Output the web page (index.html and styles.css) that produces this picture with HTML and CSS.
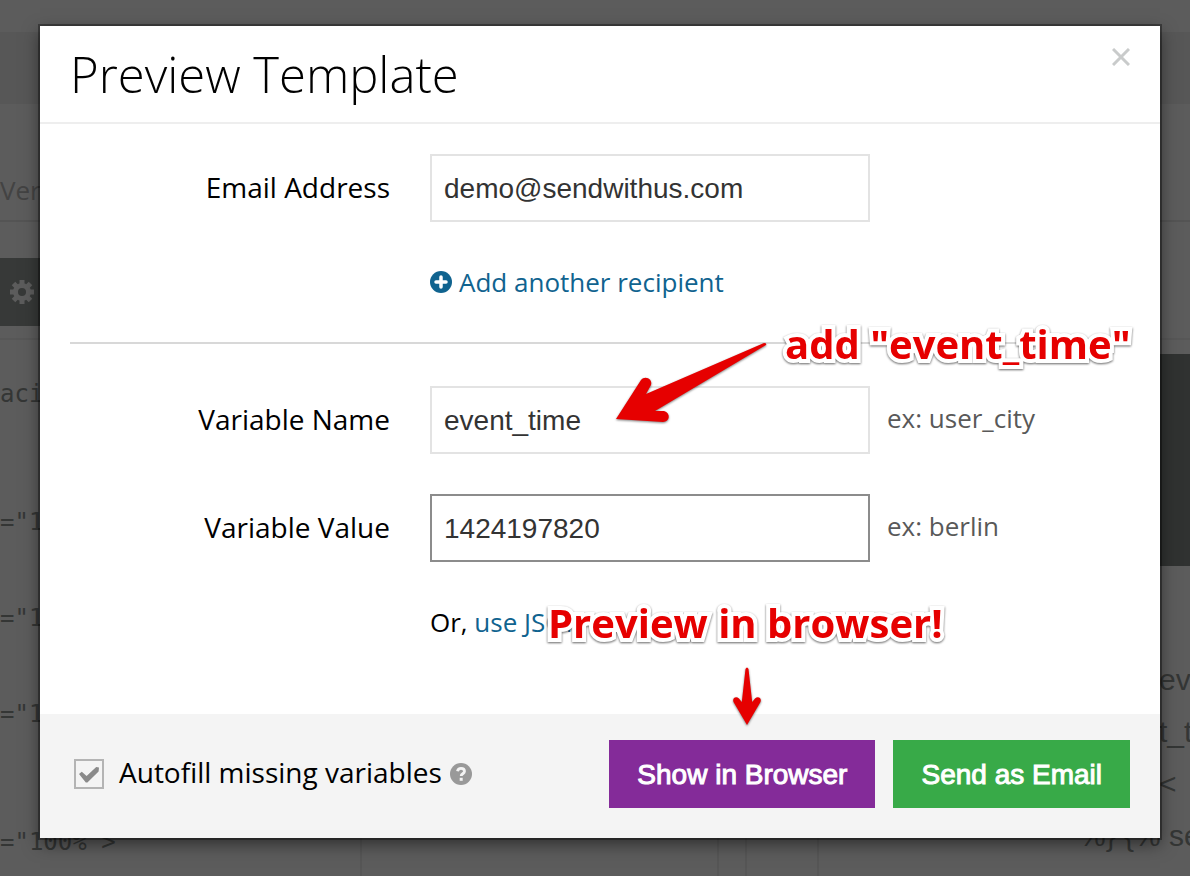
FILE: index.html
```html
<!DOCTYPE html>
<html lang="en">
<head>
    <meta charset="UTF-8">
    <meta name="viewport" content="width=device-width, initial-scale=1.0">
    <title>Preview Template</title>
    <link rel="stylesheet" href="styles.css">
</head>
<body>
    <!-- Dimmed editor behind the modal -->
    <div class="page">
        <div class="topbar"></div>
        <div class="subnav"></div>
        <div class="tabs">Ver</div>
        <div class="toolbar">
            <div class="toolbar-actions">
                <svg class="gear" viewBox="0 0 24 24">
                    <circle cx="12" cy="12" r="6.5" fill="none" stroke="currentColor" stroke-width="5"/>
                    <path d="M12 0v5M12 19v5M0 12h5M19 12h5M3.5 3.5l3.5 3.5M17 17l3.5 3.5M3.5 20.5l3.5-3.5M17 7l3.5-3.5" stroke="currentColor" stroke-width="5"/>
                </svg>
            </div>
        </div>
        <div class="workspace">
            <pre class="code">aci



="1


="1


="1



="100% &gt;</pre>
            <div class="pane"></div>
            <div class="gutter"></div>
            <div class="pane"></div>
            <div class="preview">
                <div class="preview-image"></div>
                <div class="preview-text">
                    <p class="indent-large">eve</p>
                    <p class="indent-large">t_t</p>
                    <p class="indent-large">&lt;</p>
                    <p>%} {% se</p>
                    <p class="indent-small">i</p>
                </div>
            </div>
        </div>
    </div>

    <div class="backdrop">
        <form class="modal">
            <header class="modal-header">
                <h1>Preview Template</h1>
                <button type="button" class="close" aria-label="Close">
                    <svg viewBox="0 0 18 18"><path d="M1 1l16 16M17 1L1 17" stroke="currentColor" stroke-width="3"/></svg>
                </button>
            </header>

            <div class="modal-body">
                <div class="row">
                    <label for="email">Email Address</label>
                    <input type="text" id="email" value="demo@sendwithus.com">
                </div>
                <div class="row-link">
                    <a href="#">
                        <svg class="icon" viewBox="0 0 22 22">
                            <circle cx="11" cy="11" r="11" fill="currentColor"/>
                            <path d="M11 6v10M6 11h10" stroke="#fff" stroke-width="3.500" stroke-linecap="round"/>
                        </svg>
                        Add another recipient
                    </a>
                </div>
                <hr>
                <div class="row">
                    <label for="var-name">Variable Name</label>
                    <input type="text" id="var-name" value="event_time">
                    <span class="hint">ex: user_city</span>
                </div>
                <div class="row">
                    <label for="var-value">Variable Value</label>
                    <input type="text" id="var-value" class="active" value="1424197820">
                    <span class="hint">ex: berlin</span>
                </div>
                <div class="row-link">Or,&nbsp;<a href="#">use JSON</a></div>
            </div>

            <footer class="modal-footer">
                <input type="checkbox" id="autofill" checked>
                <label for="autofill">Autofill missing variables</label>
                <svg class="icon help" viewBox="0 0 22 22">
                    <circle cx="11" cy="11" r="11" fill="currentColor"/>
                    <path d="M7.5 8.2C8 5.8 9.300 5.300 11 5.300c2 0 3.500 1.200 3.500 3 0 2.500-3.300 2.400-3.300 4.700" fill="none" stroke="#f4f4f4" stroke-width="2.800"/>
                    <path d="M9.700 14.800h3v3h-3z" fill="#f4f4f4"/>
                </svg>
                <div class="actions">
                    <button type="button" class="btn btn-purple">Show in Browser</button>
                    <button type="submit" class="btn btn-green">Send as Email</button>
                </div>
            </footer>

            <!-- Callouts -->
            <span class="note note-add">add "event_time"</span>
            <svg class="arrow arrow-left" viewBox="0 0 152 82">
                <path d="M1 77L26 38C30 33 38 37 36 43L31 52L149 1Q152 1 151 3L40 69L49 69C56 71 55 80 48 80Z"/>
            </svg>
            <span class="note note-preview">Preview in browser!</span>
            <svg class="arrow arrow-down" viewBox="0 0 30 60">
                <path d="M15 59L1.500 36C0 32 4 29.500 7 32.500L9.800 36L13.500 3Q15 0 16.500 3L20.200 36L23 32.500C26 29.500 30 32 28.500 36Z"/>
            </svg>
        </form>
    </div>
</body>
</html>
```
FILE: styles.css
```css
* {
    box-sizing: border-box;
}
body {
    margin: 0;
    background: #5c5c5c;
    color: #000;
    font-family: "Open Sans", sans-serif;
    font-size: 28px;
    line-height: 40px;
}

/* Page behind the modal */
.page {
    display: flex;
    flex-direction: column;
    height: 100vh;
    overflow: hidden;
    color: #343635;
}
.topbar {
    flex: 0 0 32px;
}
.subnav {
    flex: 0 0 72px;
    background: #575757;
}
.tabs {
    flex: 0 0 118px;
    padding-top: 66px;
    border-bottom: 2px solid #545454;
    color: #434343;
    font-size: 26px;
}
.toolbar {
    flex: 0 0 118px;
    padding-top: 36px;
    border-bottom: 2px solid #575757;
}
.toolbar-actions {
    display: flex;
    align-items: center;
    width: 362px;
    height: 68px;
    padding-left: 10px;
    background: #373938;
    color: #5c5c5c;
}
.gear {
    width: 24px;
    height: 24px;
}
.workspace {
    flex: 1;
    display: grid;
    grid-template-columns: 362px 355px 30px 70px 1fr;
    min-height: 0;
}
.code {
    margin: 0;
    padding-top: 38px;
    border-right: 2px solid #565656;
    font-family: "DejaVu Sans Mono", monospace;
    font-size: 24px;
    line-height: 32px;
}
.gutter {
    border: 2px solid #565656;
    border-width: 0 2px;
}
.pane + .preview {
    border-left: 2px solid #565656;
}
.preview-image {
    height: 212px;
    margin-top: 14px;
    background: #303231;
}
.preview-text {
    padding: 88px 0 0 260px;
    font-family: "Liberation Sans", sans-serif;
    font-size: 30px;
    line-height: 52px;
    white-space: nowrap;
}
.preview-text p {
    margin: 0;
}
.preview-text .indent-small {
    padding-left: 24px;
}
.preview-text .indent-large {
    padding-left: 80px;
}

/* Modal */
.backdrop {
    position: absolute;
    inset: 0;
    padding: 26px 30px 38px 40px;
    overflow: hidden;
}
.modal {
    position: relative;
    background: #fff;
    box-shadow: 0 0 0 2px rgba(0, 0, 0, 0.35), 0 6px 16px rgba(0, 0, 0, 0.5);
}
.modal-header {
    display: flex;
    justify-content: space-between;
    align-items: flex-start;
    padding: 14px 30px 14px;
    border-bottom: 2px solid #eee;
}
.modal-header h1 {
    margin: 0;
    font-size: 49px;
    font-weight: 300;
    line-height: 68px;
}
.close {
    width: 18px;
    height: 18px;
    margin-top: 8px;
    padding: 0;
    border: 0;
    background: none;
    color: #c9cbcb;
    cursor: pointer;
}
.close svg {
    display: block;
}
.modal-body {
    padding: 30px 30px 72px;
}
label {
    padding-bottom: 2px;
}
.row {
    display: flex;
    align-items: center;
    margin-bottom: 40px;
}
.row label {
    width: 320px;
    margin-right: 40px;
    text-align: right;
}
.row input {
    width: 440px;
    height: 68px;
    padding: 2px 12px 0;
    border: 2px solid #e3e3e3;
    border-radius: 0;
    background: #fff;
    color: #333;
    font-family: "Liberation Sans", sans-serif;
    font-size: 28px;
}
.row input.active {
    border-color: #8c8c8c;
    outline: none;
}
.hint {
    margin-left: 17px;
    padding-bottom: 4px;
    color: #595959;
    font-size: 26px;
}
.row-link {
    display: flex;
    align-items: center;
    margin-left: 360px;
    font-size: 26px;
}
a {
    display: flex;
    align-items: center;
    gap: 7px;
    color: #10638f;
    text-decoration: none;
}
.icon {
    width: 22px;
    height: 22px;
}
hr {
    height: 2px;
    margin: 40px 0 42px;
    border: 0;
    background: #d8d8d8;
}
.modal-footer {
    display: flex;
    align-items: center;
    padding: 26px 30px 30px;
    background: #f4f4f4;
}
.modal-footer label {
    padding-bottom: 4px;
}
.modal-footer input {
    appearance: none;
    width: 30px;
    height: 30px;
    margin: 0 15px 0 4px;
    border: 2px solid #b4b4b4;
}
.modal-footer input:checked::before {
    content: "";
    display: block;
    width: 20px;
    height: 18px;
    margin: 5px 3px;
    background: #8a8a8a;
    clip-path: polygon(0 44%, 14% 32%, 38% 56%, 86% 6%, 100% 8%, 98% 30%, 42% 92%, 34% 92%);
}
.help {
    margin-left: 8px;
    color: #999;
}
.actions {
    display: flex;
    gap: 18px;
    margin-left: auto;
}
.btn {
    height: 68px;
    padding: 2px 28px 0;
    border: 0;
    color: #fff;
    font-family: "Liberation Sans", sans-serif;
    font-size: 28px;
    -webkit-text-stroke: 1px #fff;
    cursor: pointer;
}
.btn-purple {
    background: #842b99;
}
.btn-green {
    background: #38aa48;
}

/* Callouts drawn over the form */
.note {
    position: absolute;
    color: #e60000;
    font-size: 40px;
    font-weight: 700;
    line-height: 56px;
    white-space: nowrap;
    -webkit-text-stroke: 8px #fff;
    paint-order: stroke fill;
    filter: drop-shadow(0 1px 1px rgba(0, 0, 0, 0.6));
}
.note-add {
    top: 290px;
    left: 745px;
}
.note-preview {
    top: 569px;
    left: 508px;
}
.arrow {
    position: absolute;
    fill: #e60000;
    filter: drop-shadow(0 1px 1px rgba(0, 0, 0, 0.5));
}
.arrow-left {
    top: 316px;
    left: 575px;
    width: 152px;
    height: 82px;
}
.arrow-down {
    top: 640px;
    left: 692px;
    width: 30px;
    height: 60px;
}
```
